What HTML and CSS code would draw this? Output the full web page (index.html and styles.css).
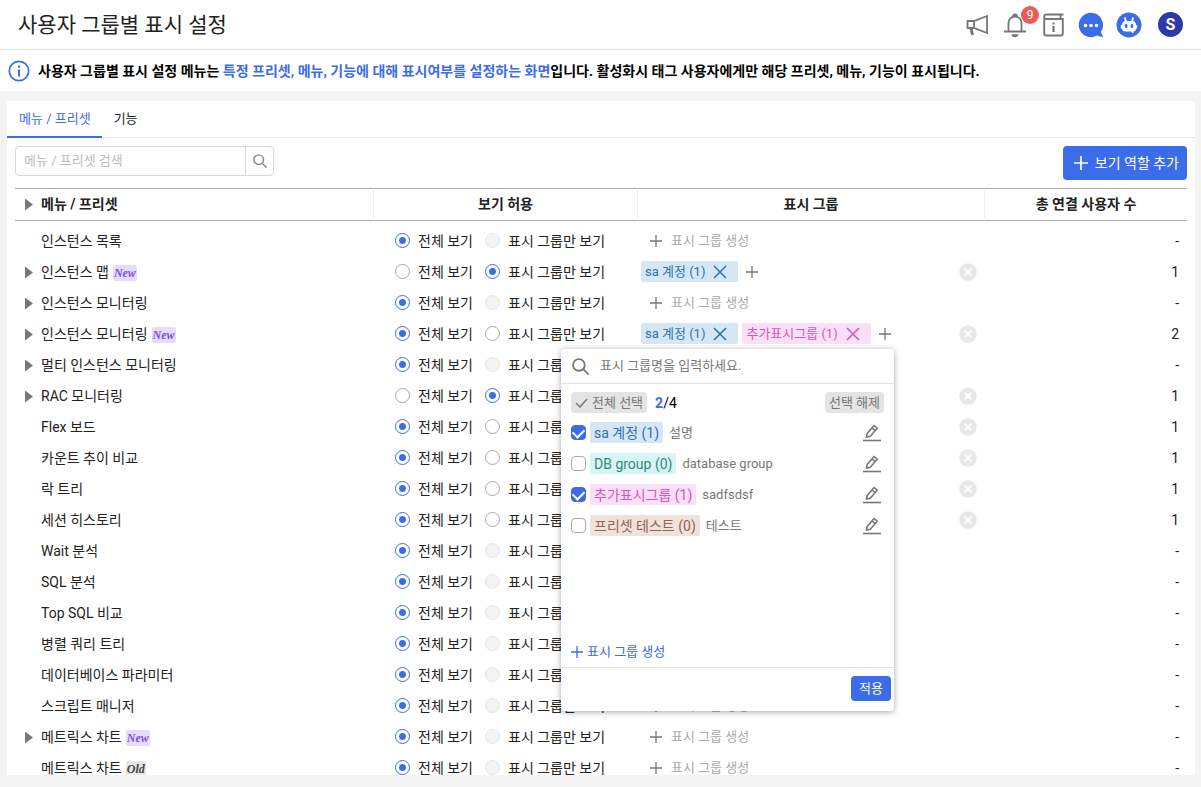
FILE: index.html
```html
<!DOCTYPE html>
<html lang="ko">
<head>
    <meta charset="UTF-8">
    <meta name="viewport" content="width=device-width, initial-scale=1.0">
    <title>사용자 그룹별 표시 설정</title>
    <link rel="stylesheet" href="styles.css">
</head>
<body>

    <!-- icons -->
    <svg class="sprite" aria-hidden="true">
        <symbol id="i-plus" viewBox="0 0 12 12"><path d="M6 0v12M0 6h12" fill="none" stroke="currentColor" stroke-width="1.3"/></symbol>
        <symbol id="i-close" viewBox="0 0 14 14"><path d="M1 1l12 12M13 1L1 13" fill="none" stroke="currentColor" stroke-width="1.6"/></symbol>
        <symbol id="i-search" viewBox="0 0 16 16"><circle cx="6.5" cy="6.5" r="5.5" fill="none" stroke="currentColor" stroke-width="1.7"/><path d="M10.5 10.5l5 5" stroke="currentColor" stroke-width="1.7"/></symbol>
        <symbol id="i-edit" viewBox="0 0 18 18"><path d="M3.5 13l.7-3.600L11 1.500l3.200 2.700-6.900 8zM9 4l3.200 2.600" fill="none" stroke="currentColor" stroke-width="1.6"/><path d="M0 16.500h18" stroke="currentColor" stroke-width="1.6"/></symbol>
        <symbol id="i-remove" viewBox="0 0 18 18"><circle cx="9" cy="9" r="8.700" fill="#e8e8e8"/><path d="M5.800 5.800l6.400 6.400M12.200 5.800l-6.400 6.400" stroke="#fff" stroke-width="2"/></symbol>
    </svg>

    <header class="topbar">
        <h1>사용자 그룹별 표시 설정</h1>
        <div class="top-icons">
            <button class="icon-btn" aria-label="공지">
                <svg width="22" height="22" viewBox="0 0 22 22" fill="none" stroke="#777" stroke-width="1.8"><path d="M1.500 7H8L21 2v17L8 14H1.500zM8 7v7"/><path d="M5 14.500L6.500 21" stroke-width="3"/></svg>
            </button>
            <button class="icon-btn bell" aria-label="알림">
                <svg width="22" height="26" viewBox="0 0 22 26" fill="none" stroke="#777" stroke-width="1.8"><path d="M4.500 19V11a6.500 6.500 0 0 1 13 0v8M0 19.500h22"/><path d="M8 5a3 3.500 0 0 1 6 0zM7.500 22.300h7a3.500 3 0 0 1-7 0z" fill="#777" stroke="none"/></svg>
                <span class="count">9</span>
            </button>
            <button class="icon-btn" aria-label="안내">
                <svg width="21" height="24" viewBox="0 0 21 24" fill="none" stroke="#777" stroke-width="1.9"><path d="M20.500 1.500H3.500a2.300 2.300 0 0 0-2.300 2.300V20.500q0 2 2 2h14.600q2 0 2-2V6H2M17.500 1.500V6"/><path d="M10.500 9.500v2M10.500 13v6" stroke-width="2.2"/></svg>
            </button>
            <button class="icon-btn" aria-label="채팅">
                <svg width="26" height="26" viewBox="0 0 26 26"><path d="M13 .8A12.200 12.200 0 1 0 19 23.600L25.200 25.200 22.800 20A12.200 12.200 0 0 0 13 .8z" fill="#3b6cea"/><g fill="#fff"><circle cx="7.500" cy="13.500" r="1.800"/><circle cx="13" cy="13.500" r="1.800"/><circle cx="18.500" cy="13.500" r="1.800"/></g></svg>
            </button>
            <button class="icon-btn" aria-label="챗봇">
                <svg width="26" height="26" viewBox="0 0 26 26"><circle cx="13" cy="13" r="12.500" fill="#3b6cea"/><path d="M9 6l1 4M17 6l-1 4" stroke="#fff" stroke-width="1.800" stroke-linecap="round"/><path d="M10 9h6q4 0 4 4h1.200v3.500H20q0 2.700-2.500 2.900L17 21.500l-2.200-2H10q-4 0-4-3H4.800V13H6q0-4 4-4z" fill="#fff"/><rect x="8.800" y="12" width="2.600" height="4" rx="1.300" fill="#3b6cea"/><rect x="14.600" y="12" width="2.600" height="4" rx="1.300" fill="#3b6cea"/></svg>
            </button>
            <button class="avatar">S</button>
        </div>
    </header>

    <div class="notice">
        <svg width="22" height="22" viewBox="0 0 22 22"><circle cx="11" cy="11" r="9.700" fill="none" stroke="#3b6cea" stroke-width="1.700"/><path d="M11 5.500v2.200M11 9.500v7" stroke="#3b6cea" stroke-width="2"/></svg>
        <p>사용자 그룹별 표시 설정 메뉴는 <em>특정 프리셋, 메뉴, 기능에 대해 표시여부를 설정하는 화면</em>입니다. 활성화시 태그 사용자에게만 해당 프리셋, 메뉴, 기능이 표시됩니다.</p>
    </div>

    <main class="panel">
        <nav class="tabs">
            <a href="#menu" class="active">메뉴 / 프리셋</a>
            <a href="#feature">기능</a>
        </nav>

        <div class="toolbar">
            <div class="search">
                <input type="text" placeholder="메뉴 / 프리셋 검색" aria-label="메뉴 / 프리셋 검색">
                <button aria-label="검색"><svg width="14" height="14"><use href="#i-search"/></svg></button>
            </div>
            <button class="primary"><svg width="14" height="14" viewBox="0 0 14 14"><path d="M7 0v14M0 7h14" stroke="#fff" stroke-width="1.700"/></svg>보기 역할 추가</button>
        </div>

        <table class="grid">
            <thead>
                <tr>
                    <th class="col-name"><span class="arrow"></span>메뉴 / 프리셋</th>
                    <th class="col-allow">보기 허용</th>
                    <th class="col-group">표시 그룹</th>
                    <th class="col-total">총 연결 사용자 수</th>
                </tr>
            </thead>
            <tbody id="rows"></tbody>
        </table>
    </main>

    <template id="picker">
        <div class="picker">
            <div class="picker-search">
                <svg width="17" height="17"><use href="#i-search"/></svg>
                <input type="text" placeholder="표시 그룹명을 입력하세요." aria-label="표시 그룹명">
            </div>
            <div class="picker-head">
                <button class="gray"><svg width="13" height="10" viewBox="0 0 13 10"><path d="M1 5l4 4 7-8" fill="none" stroke="#777" stroke-width="1.500"/></svg>전체 선택</button>
                <span class="picked"><b>2</b>/4</span>
                <button class="gray clear">선택 해제</button>
            </div>
            <ul class="picker-list">
                <li><label><input type="checkbox" checked><span class="tag blue">sa 계정 (1)</span><span class="desc">설명</span></label><button class="edit" aria-label="수정"><svg width="18" height="18"><use href="#i-edit"/></svg></button></li>
                <li><label><input type="checkbox"><span class="tag teal">DB group (0)</span><span class="desc">database group</span></label><button class="edit" aria-label="수정"><svg width="18" height="18"><use href="#i-edit"/></svg></button></li>
                <li><label><input type="checkbox" checked><span class="tag pink">추가표시그룹 (1)</span><span class="desc">sadfsdsf</span></label><button class="edit" aria-label="수정"><svg width="18" height="18"><use href="#i-edit"/></svg></button></li>
                <li><label><input type="checkbox"><span class="tag brown">프리셋 테스트 (0)</span><span class="desc">테스트</span></label><button class="edit" aria-label="수정"><svg width="18" height="18"><use href="#i-edit"/></svg></button></li>
            </ul>
            <button class="create"><svg width="12" height="12"><use href="#i-plus"/></svg>표시 그룹 생성</button>
            <div class="picker-foot"><button class="apply">적용</button></div>
        </div>
    </template>

    <script src="script.js"></script>
</body>
</html>
```

FILE: styles.css
```css
* {
    box-sizing: border-box;
}

body {
    margin: 0;
    height: 100vh;
    display: flex;
    flex-direction: column;
    overflow: hidden;
    background: #f4f4f4;
    color: #222;
    font-family: Roboto, "Noto Sans CJK KR", sans-serif;
    font-size: 14px;
    line-height: 20px;
}

button, input {
    font: inherit;
    margin: 0;
}

button {
    display: flex;
    align-items: center;
    border: none;
    padding: 0;
    background: none;
    color: inherit;
    white-space: nowrap;
    cursor: pointer;
}

svg {
    display: block;
    flex: none;
}

.sprite {
    position: absolute;
    width: 0;
    height: 0;
}

/* header */
.topbar {
    flex: none;
    display: flex;
    align-items: center;
    justify-content: space-between;
    height: 50px;
    padding: 0 18px;
    background: #fff;
    border-bottom: 1px solid #e3e3e3;
}

.topbar h1 {
    margin: 0;
    font-size: 21px;
    font-weight: 400;
    line-height: 30px;
}

.top-icons {
    display: flex;
    align-items: center;
    gap: 12px;
}

.icon-btn {
    justify-content: center;
    min-width: 26px;
    height: 26px;
}

.bell {
    position: relative;
}

.count {
    position: absolute;
    top: -6px;
    right: -11px;
    width: 18px;
    height: 18px;
    border-radius: 50%;
    background: #ee5a55;
    color: #fff;
    font-size: 12px;
    line-height: 18px;
    text-align: center;
}

.avatar {
    justify-content: center;
    width: 25px;
    height: 25px;
    margin-left: 4px;
    border-radius: 50%;
    background: #2d3aa5;
    color: #fff;
    font-size: 16px;
    font-weight: 700;
}

.notice {
    flex: none;
    display: flex;
    align-items: center;
    gap: 8px;
    height: 41px;
    padding: 0 8px;
    background: #fff;
    color: #000;
    font-weight: 700;
}

.notice p {
    margin: 0;
}

.notice em {
    font-style: normal;
    color: #3b6cea;
}

.panel {
    flex: 1;
    min-height: 0;
    margin: 10px 6px 12px 7px;
    overflow: hidden;
    background: #fff;
}

/* tabs */
.tabs {
    display: flex;
    height: 37px;
    border-bottom: 1px solid #e6e6e6;
    font-size: 13px;
    line-height: 36px;
}

.tabs a {
    height: 37px;
    padding: 0 11px 0 12px;
    color: #222;
    text-decoration: none;
}

.tabs a.active {
    color: #3b6cea;
    border-bottom: 2px solid #3b6cea;
}

.toolbar {
    display: flex;
    align-items: flex-start;
    justify-content: space-between;
    padding: 8px;
}

.search {
    display: flex;
    width: 259px;
    height: 30px;
    border: 1px solid #d9d9d9;
    border-radius: 4px;
}

.search input {
    flex: 1;
    min-width: 0;
    padding: 0 8px;
    border: none;
    outline: none;
    background: none;
    font-size: 13px;
}

.search input::placeholder {
    color: #bbb;
}

.search button {
    width: 28px;
    justify-content: center;
    border-left: 1px solid #d9d9d9;
    color: #888;
}

.primary {
    gap: 7px;
    height: 34px;
    padding: 0 8px 0 11px;
    border-radius: 4px;
    background: #3b6cea;
    color: #fff;
}

/* table */
.grid {
    width: calc(100% - 16px);
    margin: 0 8px;
    table-layout: fixed;
    border-collapse: separate;
    border-spacing: 0;
}

.grid th {
    height: 33px;
    padding: 0 0 2px;
    border-top: 1px solid #aaa;
    border-bottom: 1px solid #aaa;
    font-weight: 700;
}

.grid th + th {
    border-left: 1px solid #f0f0f0;
}

.grid .col-name {
    padding-left: 10px;
    text-align: left;
}

.col-allow {
    width: 264px;
}

.col-group {
    width: 347px;
}

.col-total {
    width: 203px;
}

.grid tbody::before {
    content: "";
    display: block;
    height: 4px;
}

.grid td {
    position: relative;
    height: 31px;
    padding: 0;
}

.grid td.name {
    padding-left: 26px;
}

.grid td.name.tree {
    padding-left: 10px;
}

.arrow {
    display: inline-block;
    width: 8px;
    height: 12px;
    margin-right: 8px;
    background: #777;
    clip-path: polygon(0 0, 100% 50%, 0 100%);
    vertical-align: -2px;
}

.badge {
    display: inline-block;
    height: 16px;
    margin-left: 4px;
    padding: 0 1px;
    border-radius: 2px;
    background: #e5dcfd;
    color: #7c4df0;
    font: italic 700 12px/16px "Liberation Serif", serif;
}

.badge.old {
    background: #e6e6e6;
    color: #444;
}

.allow {
    display: flex;
    align-items: center;
    gap: 12px;
    padding-left: 22px;
}

.allow label {
    display: flex;
    align-items: center;
    gap: 8px;
    white-space: nowrap;
}

.allow input {
    appearance: none;
    width: 15px;
    height: 15px;
    margin: 0;
    border: 1px solid #aaa;
    border-radius: 50%;
    background: #fff;
}

.allow input:checked {
    border-color: #3b6cea;
    background: radial-gradient(circle, #3b6cea 3px, #fff 4px);
}

.allow input:disabled {
    border-color: #e6e6e6;
    background: #f3f3f3;
}

.groups {
    display: flex;
    align-items: center;
    gap: 4px;
    padding: 0 7px 0 4px;
}

.tag {
    display: flex;
    align-items: center;
    height: 21px;
    padding: 0 4px;
    border-radius: 2px;
    white-space: nowrap;
}

.groups .tag {
    gap: 8px;
    padding-right: 11px;
    font-size: 13px;
}

.blue {
    background: #d5e7f6;
    color: #2f74a8;
}

.teal {
    background: #d6f5f6;
    color: #35897c;
}

.pink {
    background: #f9e0f8;
    color: #d855c0;
}

.brown {
    background: #f0e2d9;
    color: #976352;
}

.add {
    padding-left: 4px;
    color: #777;
}

.new-group {
    gap: 9px;
    padding-left: 9px;
    color: #777;
    font-size: 13px;
}

.new-group span {
    color: #aaa;
}

.remove {
    margin-left: auto;
}

.grid td.total {
    padding-right: 8px;
    text-align: right;
}

/* group picker */
.picker {
    position: absolute;
    top: 100%;
    left: -76px;
    z-index: 10;
    display: flex;
    flex-direction: column;
    width: 333px;
    height: 362px;
    border-radius: 4px;
    background: #fff;
    box-shadow: 0 1px 6px rgba(0, 0, 0, 0.35);
}

.picker-search {
    display: flex;
    align-items: center;
    gap: 11px;
    height: 35px;
    padding: 0 11px;
    border-bottom: 1px solid #e3e3e3;
    color: #777;
}

.picker-search input {
    flex: 1;
    padding: 0;
    border: none;
    outline: none;
    font-size: 13px;
}

.picker-search input::placeholder {
    color: #777;
}

.picker-head {
    display: flex;
    align-items: center;
    gap: 8px;
    padding: 8px 10px 4px;
}

.gray {
    gap: 4px;
    height: 21px;
    padding: 0 4px;
    border-radius: 4px;
    background: #e4e4e4;
    color: #777;
    font-size: 13px;
}

.picked {
    color: #000;
}

.picked b {
    color: #3b6cea;
}

.clear {
    margin-left: auto;
}

.picker-list {
    list-style: none;
    margin: 0;
    padding: 0 13px 0 10px;
}

.picker-list li {
    display: flex;
    align-items: center;
    justify-content: space-between;
    height: 31px;
}

.picker-list label {
    display: flex;
    align-items: center;
}

.picker-list input {
    appearance: none;
    display: flex;
    justify-content: center;
    width: 15px;
    height: 15px;
    margin-right: 4px;
    border: 1px solid #aaa;
    border-radius: 4px;
}

.picker-list input:checked {
    border-color: #3b6cea;
    background: #3b6cea;
}

.picker-list input:checked::before {
    content: "";
    width: 9px;
    height: 6px;
    margin-top: 2px;
    border-left: 2px solid #fff;
    border-bottom: 2px solid #fff;
    transform: rotate(-45deg);
}

.desc {
    margin-left: 6px;
    color: #777;
    font-size: 13px;
}

.edit {
    color: #777;
}

.create {
    gap: 4px;
    margin-top: auto;
    padding: 0 10px 5px;
    color: #3b6cea;
    font-size: 13px;
}

.picker-foot {
    display: flex;
    justify-content: flex-end;
    height: 44px;
    padding: 8px 3px;
    border-top: 1px solid #e3e3e3;
}

.apply {
    height: 25px;
    padding: 0 8px;
    border-radius: 4px;
    background: #3b6cea;
    color: #fff;
    font-size: 13px;
}
```

FILE: script.js
```js
const sa = { name: "sa 계정 (1)", color: "blue" };
const extra = { name: "추가표시그룹 (1)", color: "pink" };

// only: the row is shown to the display groups only
const menus = [
    { name: "인스턴스 목록" },
    { name: "인스턴스 맵", tree: true, badge: "New", groups: [sa], only: true },
    { name: "인스턴스 모니터링", tree: true },
    { name: "인스턴스 모니터링", tree: true, badge: "New", groups: [sa, extra], total: 2, open: true },
    { name: "멀티 인스턴스 모니터링", tree: true },
    { name: "RAC 모니터링", tree: true, groups: [sa], only: true },
    { name: "Flex 보드", groups: [sa] },
    { name: "카운트 추이 비교", groups: [sa] },
    { name: "락 트리", groups: [sa] },
    { name: "세션 히스토리", groups: [sa] },
    { name: "Wait 분석" },
    { name: "SQL 분석" },
    { name: "Top SQL 비교" },
    { name: "병렬 쿼리 트리" },
    { name: "데이터베이스 파라미터" },
    { name: "스크립트 매니저" },
    { name: "메트릭스 차트", tree: true, badge: "New" },
    { name: "메트릭스 차트", badge: "Old" }
];

const icon = (name, size) => `<svg width="${size}" height="${size}"><use href="#i-${name}"/></svg>`;

function groupCell(menu) {
    if (!menu.groups) {
        return `<button class="new-group">${icon("plus", 12)}<span>표시 그룹 생성</span></button>`;
    }
    const tags = menu.groups.map(g =>
        `<span class="tag ${g.color}">${g.name}<button aria-label="삭제">${icon("close", 14)}</button></span>`
    ).join("");
    return tags +
        `<button class="add" aria-label="추가">${icon("plus", 12)}</button>` +
        `<button class="remove" aria-label="모두 삭제">${icon("remove", 18)}</button>`;
}

const rows = document.getElementById("rows");

menus.forEach((menu, i) => {
    const tr = document.createElement("tr");
    const badge = menu.badge ? `<span class="badge ${menu.badge.toLowerCase()}">${menu.badge}</span>` : "";
    tr.innerHTML = `
        <td class="name ${menu.tree ? "tree" : ""}">${menu.tree ? '<span class="arrow"></span>' : ""}${menu.name}${badge}</td>
        <td><div class="allow">
            <label><input type="radio" name="allow${i}" ${menu.only ? "" : "checked"}>전체 보기</label>
            <label><input type="radio" name="allow${i}" ${menu.only ? "checked" : ""} ${menu.groups ? "" : "disabled"}>표시 그룹만 보기</label>
        </div></td>
        <td class="group"><div class="groups">${groupCell(menu)}</div></td>
        <td class="total">${menu.groups ? menu.total || 1 : "-"}</td>`;
    if (menu.open) {
        tr.querySelector(".group").appendChild(document.getElementById("picker").content.cloneNode(true));
    }
    rows.appendChild(tr);
});
```
